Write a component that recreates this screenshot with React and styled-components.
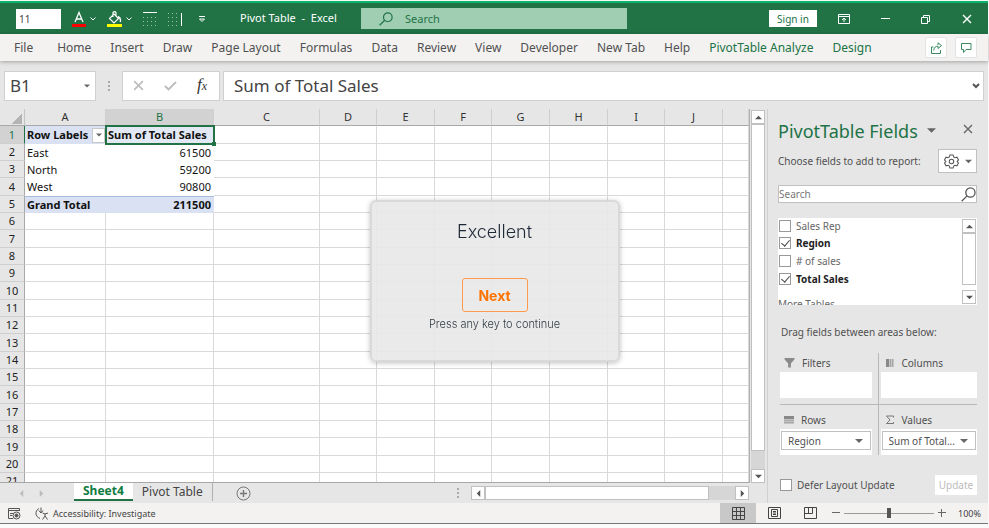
import React, { useState } from "react";
import styled, { createGlobalStyle, css } from "styled-components";

const ribbonTabs = [
  "File",
  "Home",
  "Insert",
  "Draw",
  "Page Layout",
  "Formulas",
  "Data",
  "Review",
  "View",
  "Developer",
  "New Tab",
  "Help",
];

const contextTabs = ["PivotTable Analyze", "Design"];

const columns = [
  { name: "A", width: 81 },
  { name: "B", width: 108 },
  { name: "C", width: 106 },
  { name: "D", width: 57 },
  { name: "E", width: 58 },
  { name: "F", width: 57 },
  { name: "G", width: 58 },
  { name: "H", width: 58 },
  { name: "I", width: 57 },
  { name: "J", width: 58 },
  { name: "" },
];

const pivotRows = [
  ["East", "61500"],
  ["North", "59200"],
  ["West", "90800"],
];

const emptyRows = Array.from({ length: 16 }, (_, i) => i + 6);
const emptyColumns = columns.slice(2);

const initialFields = [
  { name: "Sales Rep", checked: false },
  { name: "Region", checked: true },
  { name: "# of sales", checked: false },
  { name: "Total Sales", checked: true },
];

/* Icons */
const Caret = ({ size = 7, color = "#666" }) => (
  <svg width={size} height={size} viewBox="0 0 8 8" aria-hidden="true">
    <path d="M0 2h8L4 6z" fill={color} />
  </svg>
);

const Arrow = ({ turn = 0, color = "#555" }) => (
  <svg width="7" height="7" viewBox="0 0 8 8" aria-hidden="true">
    <path d="M0 6h8L4 2z" fill={color} transform={`rotate(${turn} 4 4)`} />
  </svg>
);

const Chevron = () => (
  <svg width="6" height="6" viewBox="0 0 6 6" fill="none" stroke="#fff">
    <path d="M0.5 1.5L3 4l2.5-2.5" />
  </svg>
);

const SearchIcon = ({ size, color }) => (
  <svg
    width={size}
    height={size}
    viewBox="0 0 14 14"
    fill="none"
    stroke={color}
    strokeWidth="1.2"
  >
    <circle cx="8.8" cy="5.2" r="4.3" />
    <path d="M5.7 8.3L0.6 13.3" />
  </svg>
);

const Cross = ({ size, color }) => (
  <svg width={size} height={size} viewBox="0 0 10 10" stroke={color} strokeWidth="1.4">
    <path d="M1 1l8 8M9 1l-8 8" />
  </svg>
);

const FontColorIcon = () => (
  <svg width="14" height="18" viewBox="0 0 14 18" fill="none">
    <path d="M3 12L7 2.5 11 12M4.4 9h5.2" stroke="#fff" strokeWidth="1.3" />
    <path d="M0 14h14v3H0z" fill="#f00" />
  </svg>
);

const FillColorIcon = () => (
  <svg width="15" height="18" viewBox="0 0 15 18" fill="none">
    <path
      d="M2.5 8.5L7 4l4.5 4.5L7 13zM6 7V3.2c0-2 3-2 3 0V6"
      stroke="#fff"
      strokeWidth="1.2"
    />
    <path d="M11 6.5c2 1 3 3 2.2 5.5" stroke="#fff" strokeWidth="1.4" />
    <path d="M0 14h15v3H0z" fill="#ff0" />
  </svg>
);

const TopBorderIcon = () => (
  <svg width="14" height="14" viewBox="0 0 14 14" stroke="#fff">
    <path d="M0 0.5h14" />
    <path d="M0 5.5h14M0 9.5h14M0 13.5h14" strokeDasharray="1 3" opacity="0.55" />
  </svg>
);

const RightBorderIcon = () => (
  <svg width="14" height="14" viewBox="0 0 14 14" stroke="#fff">
    <path d="M13.5 1v13" />
    <path
      d="M0 1.5h9M0 5.5h9M0 9.5h9M0 13.5h9"
      strokeDasharray="1 3"
      opacity="0.55"
    />
  </svg>
);

const CustomizeIcon = () => (
  <svg width="8" height="8" viewBox="0 0 8 8" fill="none" stroke="#fff">
    <path d="M1 1.5h6M1.5 4h5L4 6.5z" />
  </svg>
);

const RibbonOptionsIcon = () => (
  <svg width="12" height="10" viewBox="0 0 12 10" fill="none" stroke="#fff">
    <path d="M0.5 0.5h11v9H0.5zM0.5 2.5h11" />
    <path d="M6 8V4M4 6l2-2 2 2" />
  </svg>
);

const RestoreIcon = () => (
  <svg width="10" height="10" viewBox="0 0 10 10" fill="none" stroke="#fff">
    <path d="M0.5 3.5h6v6h-6z" />
    <path d="M2.5 3V1.5h6v6H7" />
  </svg>
);

const ShareIcon = () => (
  <svg width="13" height="12" viewBox="0 0 13 12" fill="none" stroke="#3c8a60">
    <path d="M3.5 5H1.500v6.500h9V8" />
    <path d="M3.8 8.5C4 5.5 5.5 4.2 8 4.2V6.5L11.5 3.6 8 0.8V3" />
  </svg>
);

const CommentIcon = () => (
  <svg width="12" height="12" viewBox="0 0 12 12" fill="none" stroke="#3c8a60">
    <path d="M1.5 1.5h9.500v6H6L3.5 10.5V7.500h-2z" />
  </svg>
);

const GearIcon = () => (
  <svg width="15" height="15" viewBox="0 0 16 16" fill="none" stroke="#555" strokeWidth="1.1">
    <path d="M6.3 1h3.4l.6 2.2 1.4.8 2.1-.6 1.7 2.900L14 8l1.5 1.7-1.7 2.900-2.1-.6-1.4.8L9.7 15H6.3l-.6-2.2-1.4-.8-2.1.6L.5 9.7 2 8 .5 6.300l1.7-2.900 2.1.6 1.4-.8z" />
    <circle cx="8" cy="8" r="2.4" />
  </svg>
);

const FilterIcon = () => (
  <svg width="11" height="11" viewBox="0 0 12 12">
    <path d="M0.5 1h11v1.5L7.5 7v4.5h-3V7l-4-4.5z" fill="#8a8a8a" />
  </svg>
);

const ColumnsIcon = () => (
  <svg width="10" height="10" viewBox="0 0 10 10">
    <path d="M1 1h3v8H1z" fill="#888" />
    <path d="M4 1h5v8H4z" fill="#c4c4c4" />
    <path d="M5 1h1v8H5zM7 1h1v8H7z" fill="#a8a8a8" />
  </svg>
);

const RowsIcon = () => (
  <svg width="10" height="10" viewBox="0 0 10 10">
    <path d="M0 1h10v3H0z" fill="#888" />
    <path d="M0 4h10v5H0z" fill="#c4c4c4" />
    <path d="M0 5h10v1H0zM0 7h10v1H0z" fill="#a8a8a8" />
  </svg>
);

const SigmaIcon = () => (
  <svg width="10" height="10" viewBox="0 0 10 10" fill="none" stroke="#777">
    <path d="M8.5 2.5v-1.500h-7L5 5 1.500 8.500h7V7" />
  </svg>
);

const MacroIcon = () => (
  <svg width="14" height="13" viewBox="0 0 14 13" fill="none" stroke="#555">
    <path d="M6 11.500H1.500v-10h11V4M1.500 3.500h11M3 6.500h3M3 8.500h2" />
    <circle cx="9.500" cy="8.500" r="3.500" />
    <circle cx="9.500" cy="8.500" r="1.500" fill="#555" />
  </svg>
);

const AccessibilityIcon = () => (
  <svg width="14" height="13" viewBox="0 0 14 13" fill="none" stroke="#555">
    <path d="M4 1.500C-0.500 4 0 9.500 5 11.500M6 0.500v5M3.800 3.500L6 6l2-2.500" />
    <path d="M7.500 6l2.500 1 3-1M10 7v2l-2.500 3.500M10 9l2.500 3.500" />
  </svg>
);

const NormalViewIcon = () => (
  <svg width="13" height="13" viewBox="0 0 13 13" fill="none" stroke="#444">
    <path d="M0.500 0.500h12v12H0.500zM4.500 0v13M8.500 0v13M0 4.500h13M0 8.500h13" />
  </svg>
);

const PageViewIcon = () => (
  <svg width="13" height="12" viewBox="0 0 13 12" fill="none" stroke="#444">
    <path d="M0.500 0.500h12v11H0.500zM3.500 2.500h6v7h-6zM5 4.500h3M5 6h3M5 7.500h3" />
  </svg>
);

const BreakViewIcon = () => (
  <svg width="13" height="12" viewBox="0 0 13 12" fill="none" stroke="#444">
    <path d="M0.500 0.500h12v11H0.500zM4.500 0.500v6M8.500 0.500v6M0.500 6.500h8" />
  </svg>
);

const AddIcon = () => (
  <svg width="15" height="15" viewBox="0 0 15 15" fill="none" stroke="#777">
    <circle cx="7.500" cy="7.500" r="6.500" />
    <path d="M7.500 4v7M4 7.500h7" strokeWidth="1.400" />
  </svg>
);

const App = () => {
  const [fields, setFields] = useState(initialFields);
  const [formula, setFormula] = useState("Sum of Total Sales");
  const [zoom, setZoom] = useState(100);
  const [open, setOpen] = useState(true);

  const toggleField = (name) => {
    setFields(
      fields.map((f) => (f.name === name ? { ...f, checked: !f.checked } : f))
    );
  };

  return (
    <>
      <GlobalStyle />
      <Window>
        <TitleBar>
          <QuickAccess>
            <FontSize defaultValue="11" aria-label="Font size" />
            <SplitButton aria-label="Font color">
              <FontColorIcon />
              <Chevron />
            </SplitButton>
            <SplitButton aria-label="Fill color">
              <FillColorIcon />
              <Chevron />
            </SplitButton>
            <IconButton aria-label="Top border">
              <TopBorderIcon />
            </IconButton>
            <IconButton aria-label="Right border">
              <RightBorderIcon />
            </IconButton>
            <IconButton aria-label="Customize toolbar">
              <CustomizeIcon />
            </IconButton>
          </QuickAccess>
          <DocumentName>Pivot Table&nbsp; -&nbsp; Excel</DocumentName>
          <TitleSearch>
            <SearchIcon size={14} color="#217346" />
            <TitleSearchInput placeholder="Search" aria-label="Search" />
          </TitleSearch>
          <SignIn>Sign in</SignIn>
          <WindowControls>
            <IconButton aria-label="Ribbon display options">
              <RibbonOptionsIcon />
            </IconButton>
            <IconButton aria-label="Minimize">
              <svg width="9" height="9" viewBox="0 0 9 9" stroke="#fff">
                <path d="M0 4.500h9" />
              </svg>
            </IconButton>
            <IconButton aria-label="Restore">
              <RestoreIcon />
            </IconButton>
            <IconButton aria-label="Close">
              <Cross size={10} color="#fff" />
            </IconButton>
          </WindowControls>
        </TitleBar>

        <Ribbon>
          {ribbonTabs.map((tab) => (
            <RibbonTab key={tab}>{tab}</RibbonTab>
          ))}
          {contextTabs.map((tab) => (
            <RibbonTab key={tab} $context>
              {tab}
            </RibbonTab>
          ))}
          <RibbonActions>
            <RibbonAction aria-label="Share">
              <ShareIcon />
            </RibbonAction>
            <RibbonAction aria-label="Comments">
              <CommentIcon />
            </RibbonAction>
          </RibbonActions>
        </Ribbon>

        <FormulaBar>
          <NameBox>
            <NameInput defaultValue="B1" aria-label="Name box" />
            <Caret size={6} />
          </NameBox>
          <Grip />
          <FormulaButtons>
            <IconButton aria-label="Cancel">
              <Cross size={11} color="#bbb" />
            </IconButton>
            <IconButton aria-label="Enter">
              <svg width="13" height="10" viewBox="0 0 13 10" fill="none" stroke="#bbb" strokeWidth="1.800">
                <path d="M1 5l3.500 3.500L12 1" />
              </svg>
            </IconButton>
            <FxButton>
              f<sub>x</sub>
            </FxButton>
          </FormulaButtons>
          <FormulaBox>
            <FormulaInput
              value={formula}
              aria-label="Formula"
              onChange={(e) => setFormula(e.target.value)}
            />
            <svg width="8" height="8" viewBox="0 0 8 8" fill="none" stroke="#555" strokeWidth="2">
              <path d="M1 2l3 3 3-3" />
            </svg>
          </FormulaBox>
        </FormulaBar>

        <Workspace>
          <SheetArea>
            <SheetRow>
              <SheetView>
                <Sheet>
                  <colgroup>
                    <col width="25" />
                    {columns.map((c) => (
                      <col key={c.name} width={c.width} />
                    ))}
                  </colgroup>
                  <thead>
                    <tr>
                      <Corner />
                      {columns.map((c) => (
                        <ColumnHead key={c.name} scope="col" $active={c.name === "B"}>
                          {c.name}
                        </ColumnHead>
                      ))}
                    </tr>
                  </thead>
                  <tbody>
                    <SheetLine>
                      <RowHead scope="row" $active>
                        1
                      </RowHead>
                      <Cell $fill $bold>
                        <LabelCell>
                          Row Labels
                          <FilterButton aria-label="Filter row labels">
                            <Caret size={6} />
                          </FilterButton>
                        </LabelCell>
                      </Cell>
                      <SelectedCell>Sum of Total Sales</SelectedCell>
                      {emptyColumns.map((c) => (
                        <Cell key={c.name} $lined />
                      ))}
                    </SheetLine>
                    {pivotRows.map(([label, total], i) => (
                      <SheetLine key={label}>
                        <RowHead scope="row">{i + 2}</RowHead>
                        <Cell>{label}</Cell>
                        <Cell $right>{total}</Cell>
                        {emptyColumns.map((c) => (
                          <Cell key={c.name} $lined />
                        ))}
                      </SheetLine>
                    ))}
                    <SheetLine>
                      <RowHead scope="row">5</RowHead>
                      <Cell $fill $bold $total>
                        Grand Total
                      </Cell>
                      <Cell $fill $bold $total $right>
                        211500
                      </Cell>
                      {emptyColumns.map((c) => (
                        <Cell key={c.name} $lined />
                      ))}
                    </SheetLine>
                    {emptyRows.map((n) => (
                      <SheetLine key={n}>
                        <RowHead scope="row">{n}</RowHead>
                        {columns.map((c) => (
                          <Cell key={c.name} $lined />
                        ))}
                      </SheetLine>
                    ))}
                  </tbody>
                </Sheet>
              </SheetView>
              <VerticalScroll>
                <ScrollButton aria-label="Scroll up">
                  <Arrow />
                </ScrollButton>
                <ScrollThumb />
                <ScrollTrack />
                <ScrollButton aria-label="Scroll down">
                  <Arrow turn={180} />
                </ScrollButton>
              </VerticalScroll>
            </SheetRow>

            <SheetTabs>
              <TabArrows>
                <IconButton aria-label="Previous sheet">
                  <Arrow turn={-90} color="#bbb" />
                </IconButton>
                <IconButton aria-label="Next sheet">
                  <Arrow turn={90} color="#bbb" />
                </IconButton>
              </TabArrows>
              <SheetTab $active>Sheet4</SheetTab>
              <SheetTab>Pivot Table</SheetTab>
              <AddSheet aria-label="New sheet">
                <AddIcon />
              </AddSheet>
              <HorizontalScroll>
                <Grip />
                <ScrollButton aria-label="Scroll left">
                  <Arrow turn={-90} />
                </ScrollButton>
                <ScrollThumb />
                <ScrollTrack />
                <ScrollButton aria-label="Scroll right">
                  <Arrow turn={90} />
                </ScrollButton>
              </HorizontalScroll>
            </SheetTabs>
          </SheetArea>

          <Pane>
            <PaneHeader>
              <PaneTitle>PivotTable Fields</PaneTitle>
              <Caret size={9} />
              <PaneClose aria-label="Close pane">
                <Cross size={10} color="#666" />
              </PaneClose>
            </PaneHeader>
            <PaneLine>
              Choose fields to add to report:
              <GearButton aria-label="Field list options">
                <GearIcon />
                <Caret />
              </GearButton>
            </PaneLine>
            <FieldSearch>
              <FieldSearchInput placeholder="Search" aria-label="Search fields" />
              <SearchIcon size={15} color="#555" />
            </FieldSearch>
            <FieldList>
              <FieldItems>
                {fields.map((f) => (
                  <FieldLabel key={f.name} $checked={f.checked}>
                    <Checkbox
                      type="checkbox"
                      checked={f.checked}
                      onChange={() => toggleField(f.name)}
                    />
                    {f.name}
                  </FieldLabel>
                ))}
                <MoreTables href="#more">More Tables...</MoreTables>
              </FieldItems>
              <FieldScroll>
                <ScrollButton aria-label="Scroll fields up">
                  <Arrow />
                </ScrollButton>
                <ScrollThumb />
                <ScrollButton aria-label="Scroll fields down">
                  <Arrow turn={180} />
                </ScrollButton>
              </FieldScroll>
            </FieldList>
            <DragHint>Drag fields between areas below:</DragHint>
            <Areas>
              <Area $left $top>
                <AreaName>
                  <FilterIcon />
                  Filters
                </AreaName>
                <AreaBox />
              </Area>
              <Area $top>
                <AreaName>
                  <ColumnsIcon />
                  Columns
                </AreaName>
                <AreaBox />
              </Area>
              <Area $left>
                <AreaName>
                  <RowsIcon />
                  Rows
                </AreaName>
                <AreaBox>
                  <AreaField>
                    <AreaSelect aria-label="Rows field">
                      <option>Region</option>
                    </AreaSelect>
                    <Caret size={8} />
                  </AreaField>
                </AreaBox>
              </Area>
              <Area>
                <AreaName>
                  <SigmaIcon />
                  Values
                </AreaName>
                <AreaBox>
                  <AreaField>
                    <AreaSelect aria-label="Values field">
                      <option>Sum of Total...</option>
                    </AreaSelect>
                    <Caret size={8} />
                  </AreaField>
                </AreaBox>
              </Area>
            </Areas>
            <PaneFooter>
              <DeferLabel>
                <Checkbox type="checkbox" />
                Defer Layout Update
              </DeferLabel>
              <UpdateButton disabled>Update</UpdateButton>
            </PaneFooter>
          </Pane>
        </Workspace>

        <StatusBar>
          <IconButton aria-label="Record macro">
            <MacroIcon />
          </IconButton>
          <AccessibilityButton>
            <AccessibilityIcon />
            Accessibility: Investigate
          </AccessibilityButton>
          <ViewButtons>
            <ViewButton aria-label="Normal view" $active>
              <NormalViewIcon />
            </ViewButton>
            <ViewButton aria-label="Page layout view">
              <PageViewIcon />
            </ViewButton>
            <ViewButton aria-label="Page break view">
              <BreakViewIcon />
            </ViewButton>
          </ViewButtons>
          <ZoomButton aria-label="Zoom out" onClick={() => setZoom(zoom - 10)}>
            <svg width="8" height="8" viewBox="0 0 8 8" stroke="#666">
              <path d="M0 3.500h8" />
            </svg>
          </ZoomButton>
          <ZoomSlider
            type="range"
            min="0"
            max="200"
            value={zoom}
            aria-label="Zoom"
            onChange={(e) => setZoom(Number(e.target.value))}
          />
          <ZoomButton aria-label="Zoom in" onClick={() => setZoom(zoom + 10)}>
            <svg width="8" height="8" viewBox="0 0 8 8" stroke="#666">
              <path d="M0 3.500h8M3.500 0v8" />
            </svg>
          </ZoomButton>
          <ZoomValue>{zoom}%</ZoomValue>
        </StatusBar>
      </Window>

      {open && (
        <Overlay>
          <Dialog role="dialog" aria-labelledby="dialog-title">
            <DialogTitle id="dialog-title">Excellent</DialogTitle>
            <NextButton onClick={() => setOpen(false)}>Next</NextButton>
            <DialogHint>Press any key to continue</DialogHint>
          </Dialog>
        </Overlay>
      )}
    </>
  );
};

export default App;

/* Styled Components */
const GlobalStyle = createGlobalStyle`
  * {
    box-sizing: border-box;
  }
  body {
    margin: 0;
    background: #fafafa;
    font-family: "Noto Sans", "Open Sans", sans-serif;
    font-size: 11px;
    color: #444;
  }
  button, input, select {
    font: inherit;
    color: inherit;
    margin: 0;
    padding: 0;
    border: none;
    border-radius: 0;
    background: none;
    outline: none;
    min-width: 0;
  }
  svg {
    display: block;
    flex: none;
  }
`;

const Window = styled.div`
  display: flex;
  flex-direction: column;
  height: 100vh;
  padding: 1px 1px 4px 0;
  overflow: hidden;
`;

const IconButton = styled.button`
  display: flex;
  align-items: center;
  justify-content: center;
`;

const TitleBar = styled.header`
  display: flex;
  align-items: center;
  flex: none;
  height: 33px;
  padding: 0 16px;
  border-top: 2px solid #0cb46c;
  background: #217346;
  color: #fff;
`;

const QuickAccess = styled.div`
  display: flex;
  align-items: center;
  gap: 11px;
  width: 224px;

  & > :last-child {
    margin-left: 5px;
  }
`;

const FontSize = styled.input`
  width: 45px;
  height: 20px;
  padding-left: 3px;
  background: #fff;
  color: #444;
  font-size: 10px;
`;

const SplitButton = styled.button`
  display: flex;
  align-items: center;
  gap: 4px;
`;

const DocumentName = styled.div`
  width: 121px;
  padding-bottom: 2px;
  white-space: nowrap;
  font-size: 11px;
`;

const TitleSearch = styled.label`
  display: flex;
  align-items: center;
  flex: 0 1 266px;
  gap: 12px;
  height: 21px;
  margin-right: auto;
  padding-left: 18px;
  background: #a0ceb3;
`;

const TitleSearchInput = styled.input`
  flex: 1;
  &::placeholder {
    color: #217346;
    opacity: 1;
  }
`;

const SignIn = styled.button`
  width: 48px;
  height: 17px;
  background: #fff;
  color: #217346;
  font-size: 10px;
  line-height: 16px;
  white-space: nowrap;
`;

const WindowControls = styled.div`
  display: flex;
  align-items: center;
  gap: 31px;
  margin-left: 21px;
`;

const Ribbon = styled.nav`
  display: flex;
  align-items: center;
  flex: none;
  gap: 19px;
  height: 27px;
  padding: 0 11px 0 14px;
  background: #f3f2f1;
  box-shadow: 0 1px 4px rgba(0, 0, 0, 0.3);
  z-index: 1;
`;

const RibbonTab = styled.button`
  font-size: 12px;
  white-space: nowrap;
  color: ${(p) => (p.$context ? "#217346" : "#505050")};

  &:first-child {
    margin-right: 5px;
  }
`;

const RibbonActions = styled.div`
  display: flex;
  gap: 8px;
  margin-left: auto;
`;

const RibbonAction = styled.button`
  display: flex;
  align-items: center;
  justify-content: center;
  width: 22px;
  height: 21px;
  border: 1px solid #e3e3e3;
  border-radius: 2px;
  background: #fff;
`;

const FormulaBar = styled.div`
  display: flex;
  align-items: center;
  flex: none;
  height: 48px;
  padding: 9px 4px 8px;
  background: #e6e6e6;
`;

const boxStyle = css`
  display: flex;
  align-items: center;
  height: 30px;
  border: 1px solid #d0d0d0;
  background: #fff;
`;

const NameBox = styled.div`
  ${boxStyle}
  width: 92px;
  padding: 0 5px;
`;

const NameInput = styled.input`
  flex: 1;
  width: 0;
  font-size: 17px;
`;

const Grip = styled.span`
  width: 2px;
  height: 10px;
  margin: 0 12px;
  background: repeating-linear-gradient(#aaa 0 2px, transparent 2px 4px);
`;

const FormulaButtons = styled.div`
  ${boxStyle}
  width: 98px;
  padding-left: 10px;
  gap: 20px;
`;

const FxButton = styled.button`
  font-family: "Liberation Serif", serif;
  font-style: italic;
  font-size: 17px;
  line-height: 18px;
  color: #333;

  sub {
    font-size: 12px;
    vertical-align: baseline;
  }
`;

const FormulaBox = styled.div`
  ${boxStyle}
  flex: 1;
  margin-left: 3px;
  padding: 0 3px 0 10px;
`;

const FormulaInput = styled.input`
  flex: 1;
  font-size: 17px;
`;

const Workspace = styled.main`
  display: flex;
  flex: 1;
  min-height: 0;
  background: #e6e6e6;
`;

const SheetArea = styled.section`
  display: flex;
  flex-direction: column;
  flex: 1;
  min-width: 0;
`;

const SheetRow = styled.div`
  display: flex;
  flex: 1;
  min-height: 0;
`;

const SheetView = styled.div`
  flex: 1;
  min-width: 0;
  overflow: hidden;
  border-right: 1px solid #b0b0b0;
  border-bottom: 1px solid #a8a8a8;
`;

const Sheet = styled.table`
  width: 100%;
  table-layout: fixed;
  border-collapse: separate;
  border-spacing: 0;
  font-family: "Noto Sans", "Open Sans", sans-serif;
  font-size: 11px;
  line-height: 16px;
  color: #111;
`;

const Corner = styled.td`
  padding: 0;
  border-right: 1px solid #c4c4c4;
  border-bottom: 1px solid #a8a8a8;
  background: linear-gradient(135deg, transparent 50%, #b4b4b4 50%) no-repeat
    11px 4px / 11px 11px #e6e6e6;
`;

const ColumnHead = styled.th`
  height: 17px;
  padding: 0;
  font-weight: normal;
  border-right: 1px solid #cfcfcf;
  border-bottom: 1px solid ${(p) => (p.$active ? "#217346" : "#a8a8a8")};
  background: ${(p) => (p.$active ? "#d2d2d2" : "#e6e6e6")};
  color: ${(p) => (p.$active ? "#217346" : "#333")};
`;

const SheetLine = styled.tr`
  height: 17px;

  &:nth-child(3n + 1) {
    height: 18px;
  }
`;

const RowHead = styled.th`
  padding: 0;
  font-weight: normal;
  border-right: 1px solid ${(p) => (p.$active ? "#217346" : "#a8a8a8")};
  border-bottom: 1px solid #cfcfcf;
  background: ${(p) => (p.$active ? "#d2d2d2" : "#e6e6e6")};
  color: ${(p) => (p.$active ? "#217346" : "#222")};
`;

const Cell = styled.td`
  padding: 0 3px 0 2px;
  white-space: nowrap;
  text-align: ${(p) => (p.$right ? "right" : "left")};
  font-weight: ${(p) => (p.$bold ? "bold" : "normal")};
  background: ${(p) => (p.$fill ? "#d9e1f2" : "#fff")};
  ${(p) =>
    p.$lined &&
    css`
      border-right: 1px solid #d9d9d9;
      border-bottom: 1px solid #d9d9d9;
    `}
  ${(p) =>
    p.$total &&
    css`
      border-top: 1px solid #a9bce0;
    `}
`;

const SelectedCell = styled.td`
  position: relative;
  padding: 0 2px;
  font-weight: bold;
  white-space: nowrap;
  background: #e3e9f4;
  box-shadow: inset 0 0 0 1px #217346, 0 0 0 1px #217346;

  &::after {
    content: "";
    position: absolute;
    right: -2px;
    bottom: -2px;
    width: 4px;
    height: 4px;
    background: #217346;
  }
`;

const LabelCell = styled.div`
  display: flex;
  align-items: center;
  justify-content: space-between;
`;

const FilterButton = styled.button`
  display: flex;
  align-items: center;
  justify-content: center;
  width: 13px;
  height: 15px;
  margin-right: -2px;
  border: 1px solid #c8c8c8;
  background: #fff;
`;

const ScrollButton = styled.button`
  display: flex;
  align-items: center;
  justify-content: center;
  flex: none;
  width: 14px;
  height: 14px;
  border: 1px solid #c0c0c0;
  background: #fff;
`;

const ScrollThumb = styled.div`
  flex: 1;
  border: 1px solid #c0c0c0;
  background: #fff;
`;

const ScrollTrack = styled.div`
  background: #d6d6d6;
`;

const VerticalScroll = styled.div`
  display: flex;
  flex-direction: column;
  width: 14px;
  margin: 1px 2px 0 1px;

  ${ScrollTrack} {
    height: 18px;
  }
`;

const SheetTabs = styled.div`
  display: flex;
  flex: none;
  height: 20px;
`;

const TabArrows = styled.div`
  display: flex;
  align-items: center;
  gap: 13px;
  width: 74px;
  padding-left: 18px;
`;

const SheetTab = styled.button`
  height: 18px;
  padding: 0 9px;
  font-size: 12px;
  line-height: 14px;
  white-space: nowrap;
  ${(p) =>
    p.$active
      ? css`
          border-bottom: 2px solid #217346;
          background: #fff;
          color: #107c41;
          font-weight: bold;
        `
      : css`
          border-right: 1px solid #b0b0b0;
        `}
`;

const AddSheet = styled(IconButton)`
  margin: 2px auto 2px 23px;
`;

const HorizontalScroll = styled.div`
  display: flex;
  align-items: center;
  flex: 0 1 304px;
  margin-right: 18px;

  ${ScrollTrack} {
    width: 26px;
    height: 14px;
  }
  ${ScrollThumb} {
    height: 14px;
  }
`;

const Pane = styled.aside`
  display: flex;
  flex-direction: column;
  width: 221px;
  padding: 10px 11px 0 10px;
  border-left: 1px solid #d0d0d0;
  color: #505050;
  font-size: 10px;
`;

const PaneHeader = styled.div`
  display: flex;
  align-items: center;
  gap: 9px;
  height: 23px;
`;

const PaneTitle = styled.h2`
  margin: 0;
  font-size: 18px;
  font-weight: normal;
  line-height: 22px;
  white-space: nowrap;
  color: #217346;
`;

const PaneClose = styled(IconButton)`
  margin: 0 4px 4px auto;
`;

const PaneLine = styled.div`
  display: flex;
  align-items: center;
  justify-content: space-between;
  margin-top: 7px;
  white-space: nowrap;
`;

const GearButton = styled.button`
  display: flex;
  align-items: center;
  justify-content: center;
  gap: 6px;
  width: 39px;
  height: 24px;
  border: 1px solid #c0c0c0;
  background: #fff;
`;

const FieldSearch = styled.label`
  display: flex;
  align-items: center;
  height: 18px;
  margin-top: 12px;
  border: 1px solid #c0c0c0;
  background: #fff;
`;

const FieldSearchInput = styled.input`
  flex: 1;
  &::placeholder {
    color: #777;
    opacity: 1;
  }
`;

const FieldList = styled.div`
  display: flex;
  flex: none;
  height: 87px;
  margin-top: 15px;
  overflow: hidden;
  background: #fff;
`;

const FieldItems = styled.div`
  flex: 1;
`;

const FieldLabel = styled.label`
  display: flex;
  align-items: center;
  gap: 5px;
  height: 18px;
  padding-left: 1px;
  font-weight: ${(p) => (p.$checked ? "bold" : "normal")};
  color: ${(p) => (p.$checked ? "#222" : "#666")};

  &:first-child {
    height: 16px;
  }
`;

const Checkbox = styled.input`
  appearance: none;
  display: flex;
  justify-content: center;
  width: 12px;
  height: 12px;
  border: 1px solid #999;
  background: #fff;

  &:checked::after {
    content: "";
    width: 4px;
    height: 7px;
    border: solid #444;
    border-width: 0 1px 1px 0;
    transform: rotate(40deg);
  }
`;

const MoreTables = styled.a`
  display: block;
  margin-top: 9px;
  color: #666;
  text-decoration: none;
`;

const FieldScroll = styled.div`
  display: flex;
  flex-direction: column;
  width: 14px;
  margin: 1px;

  ${ScrollThumb} {
    margin-bottom: 5px;
  }
`;

const DragHint = styled.p`
  margin: 19px 0 13px 3px;
  line-height: 16px;
  white-space: nowrap;
`;

const Areas = styled.div`
  display: grid;
  grid-template-columns: repeat(2, minmax(0, 1fr));
  margin-left: 2px;
`;

const Area = styled.div`
  padding: ${(p) => (p.$left ? "0 6px 0 0" : "0 0 0 2px")};
  border-right: ${(p) => (p.$left ? "1px solid #b8b8b8" : "none")};
  ${(p) =>
    p.$top
      ? css`
          padding-bottom: 6px;
          border-bottom: 1px solid #b8b8b8;
        `
      : css`
          padding-top: 5px;
        `}
`;

const AreaName = styled.div`
  display: flex;
  align-items: center;
  gap: 7px;
  height: 19px;
  padding-left: 4px;
`;

const AreaBox = styled.div`
  height: 26px;
  padding: 2px 1px 5px;
  background: #fff;
`;

const AreaField = styled.div`
  display: flex;
  align-items: center;
  height: 19px;
  padding: 0 7px 0 6px;
  border: 1px solid #c0c0c0;
`;

const AreaSelect = styled.select`
  appearance: none;
  flex: 1;
`;

const PaneFooter = styled.div`
  display: flex;
  align-items: center;
  justify-content: space-between;
  margin: auto 0 8px 2px;
`;

const DeferLabel = styled.label`
  display: flex;
  align-items: center;
  gap: 5px;
  white-space: nowrap;
`;

const UpdateButton = styled.button`
  width: 42px;
  height: 20px;
  background: #fff;
  color: #bbb;
`;

const StatusBar = styled.footer`
  display: flex;
  align-items: center;
  flex: none;
  height: 21px;
  padding: 0 7px;
  border-bottom: 1px solid #777;
  background: #f3f2f1;
`;

const AccessibilityButton = styled.button`
  display: flex;
  align-items: center;
  gap: 4px;
  margin-left: 14px;
  font-size: 9px;
`;

const ViewButtons = styled.div`
  display: flex;
  height: 100%;
  margin-left: auto;
`;

const ViewButton = styled.button`
  display: flex;
  align-items: center;
  justify-content: center;
  width: 36px;
  background: ${(p) => (p.$active ? "#c8c8c8" : "transparent")};
`;

const ZoomButton = styled(IconButton)`
  margin: 0 4px;
`;

const ZoomSlider = styled.input`
  appearance: none;
  width: 90px;
  height: 12px;
  background: linear-gradient(#999, #999) no-repeat center / 100% 1px;

  &::-webkit-slider-thumb {
    appearance: none;
    width: 4px;
    height: 10px;
    background: #555;
  }
`;

const ZoomValue = styled.span`
  margin-left: 8px;
  font-size: 9px;
`;

const Overlay = styled.div`
  position: fixed;
  inset: 0;
  display: flex;
  align-items: center;
  justify-content: center;
  padding-top: 34px;
  z-index: 2;
`;

const Dialog = styled.div`
  display: flex;
  flex-direction: column;
  align-items: center;
  width: 250px;
  padding: 18px 16px 28px;
  border: 2px solid #d9d9d9;
  border-radius: 6px;
  background: rgba(232, 232, 232, 0.92);
  box-shadow: 0 1px 5px rgba(0, 0, 0, 0.25);
  font-family: Inter, sans-serif;
  font-optical-sizing: none;
`;

const DialogTitle = styled.h1`
  margin: 0 0 34px;
  font-size: 18px;
  font-weight: 300;
  line-height: 24px;
  color: #1f2937;
`;

const NextButton = styled.button`
  width: 66px;
  height: 34px;
  border: 1px solid #ff9a4d;
  border-radius: 3px;
  color: #ff7300;
  font-size: 14px;
  font-weight: bold;
`;

const DialogHint = styled.p`
  margin: 4px 0 0;
  font-size: 11px;
  font-weight: 300;
  line-height: 16px;
  color: #333b45;
`;
